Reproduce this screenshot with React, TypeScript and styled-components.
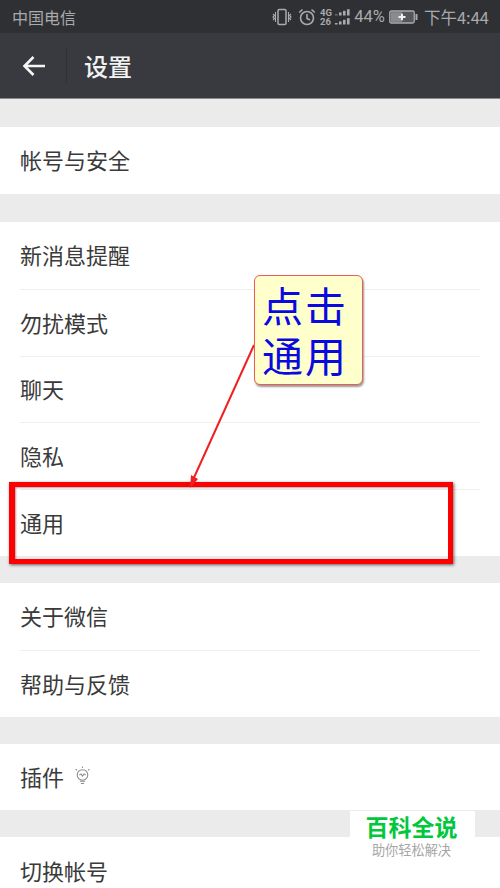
import React from "react";
import styled, { createGlobalStyle } from "styled-components";

const GlobalStyle = createGlobalStyle`
  html, body {
    margin: 0;
    padding: 0;
    background: #ebebeb;
    font-family: "Noto Sans CJK SC", "Noto Sans", sans-serif;
  }
`;

const Page = styled.div`
  position: relative;
  width: 500px;
  height: 888px;
  overflow: hidden;
  background: #ebebeb;
`;

const StatusBar = styled.div`
  height: 33px;
  background: #2f3034;
  color: #a9aaac;
  font-size: 16px;
  display: flex;
  align-items: center;
  justify-content: space-between;
  padding: 0 11px 0 12px;
`;

const StatusRight = styled.div`
  display: flex;
  align-items: center;
  gap: 4px;
`;

const Percent = styled.span`
  font-family: "Roboto", sans-serif;
  font-size: 16.5px;
  margin-left: -1px;
`;

const Clock = styled.span`
  margin-left: 2px;
  font-size: 16.5px;
`;

const Toolbar = styled.div`
  height: 65px;
  background: #393a3f;
  border-bottom: 1px solid #8b8b8b;
  display: flex;
  align-items: center;
`;

const BackSlot = styled.div`
  width: 67px;
  height: 34px;
  border-right: 1px solid #303135;
  display: flex;
  align-items: center;
  padding-left: 22px;
  box-sizing: border-box;
`;

const Title = styled.div`
  margin-left: 17px;
  font-size: 24px;
  font-weight: 500;
  color: #f2f2f2;
`;

const Section = styled.div<{ $top: number }>`
  margin-top: ${(p) => p.$top}px;
  background: #fff;
`;

const Row = styled.div`
  height: 66.8px;
  margin-left: 20px;
  margin-right: 20px;
  padding-bottom: 2px;
  box-sizing: border-box;
  display: flex;
  align-items: center;
  gap: 10px;
  font-size: 22px;
  color: #3a3a3a;
  & + & {
    border-top: 1px solid #efefef;
  }
`;

const RedBox = styled.div`
  position: absolute;
  left: 9px;
  top: 482px;
  width: 444px;
  height: 82px;
  box-sizing: border-box;
  border: 5px solid #ff0000;
  border-left-width: 6px;
  box-shadow: 1px 1px 3px rgba(0, 0, 0, 0.6), inset 1px 1px 2px rgba(0, 0, 0, 0.35);
`;

const Arrow = styled.svg`
  position: absolute;
  left: 180px;
  top: 335px;
`;

const Callout = styled.div`
  position: absolute;
  left: 254px;
  top: 275px;
  width: 109px;
  height: 110px;
  box-sizing: border-box;
  background: #ffffcc;
  border: 1.5px solid #ee5a55;
  border-radius: 6px;
  box-shadow: 1px 2px 2px rgba(0, 0, 0, 0.4);
  color: #0a0ae0;
  font-family: "Liberation Sans", "Noto Sans CJK SC", sans-serif;
  font-size: 41px;
  line-height: 50px;
  padding: 7px 0 0 7px;
  letter-spacing: 2px;
`;

const CalloutLine = styled.div``;

const Watermark = styled.div`
  position: absolute;
  left: 350px;
  top: 811px;
  width: 125px;
  height: 48px;
  background: #fff;
  text-align: center;
  font-family: "Liberation Sans", "Noto Sans CJK SC", sans-serif;
`;

const MarkTitle = styled.div`
  color: #00c83c;
  font-size: 23px;
  font-weight: 700;
  line-height: 30px;
  margin-top: 2px;
  margin-right: 2px;
`;

const MarkSub = styled.div`
  color: #a6a6a6;
  font-size: 13.2px;
  line-height: 16px;
  margin-right: 2px;
`;

const VibrateSvg = styled.svg`
  margin-right: 2px;
`;

const VibrateIcon = () => (
  <VibrateSvg width="20" height="18" viewBox="0 0 20 18" fill="none" stroke="#a9aaac" strokeWidth="1.5">
    <rect x="6" y="1.5" width="8" height="15" rx="1.2" />
    <path d="M3.5 4v10M1 6l1.5 1.5L1 9l1.5 1.5L1 12M16.5 4v10M19 6l-1.5 1.5L19 9l-1.5 1.5L19 12" strokeWidth="1.1" />
  </VibrateSvg>
);

const AlarmIcon = () => (
  <svg width="18" height="18" viewBox="0 0 18 18" fill="none" stroke="#a9aaac" strokeWidth="1.6">
    <circle cx="9" cy="10" r="6.5" />
    <path d="M9 6v4.5l3 1.5M1.2 4.5L4.5 1.5M16.8 4.5L13.5 1.5" />
  </svg>
);

const NetworkIcon = () => {
  const bars = [0, 1, 2, 3];
  return (
    <svg width="31" height="18" viewBox="0 0 31 18" fill="#a9aaac">
      <text x="0" y="7.5" fontSize="9.5" fontWeight="700" fontFamily="Roboto, sans-serif">4G</text>
      <text x="0" y="17" fontSize="9.5" fontWeight="700" fontFamily="Roboto, sans-serif">26</text>
      {bars.map((i) => (
        <rect key={"t" + i} x={15 + i * 4} y={7.5 - i * 1.6 - 1.5} width="2.6" height={i * 1.6 + 1.5} opacity={i === 0 ? 0.5 : 1} />
      ))}
      {bars.map((i) => (
        <rect key={"b" + i} x={15 + i * 4} y={16.5 - i * 1.6 - 1.5} width="2.6" height={i * 1.6 + 1.5} />
      ))}
    </svg>
  );
};

const BatteryIcon = () => (
  <svg width="29" height="14" viewBox="0 0 29 14">
    <rect x="0.75" y="1" width="24.5" height="12" rx="1.5" fill="#55565a" stroke="#a9aaac" strokeWidth="1.3" />
    <rect x="2" y="2.2" width="11" height="9.6" fill="#8a8b8e" />
    <rect x="26.5" y="4" width="2" height="6" rx="0.6" fill="#a9aaac" />
    <path d="M9.5 7h7M13 3.8v6.4" stroke="#f0f0f0" strokeWidth="2" />
  </svg>
);

const BulbIcon = () => (
  <svg width="17" height="19" viewBox="0 0 16 18" fill="none" stroke="#8a8a8a" strokeWidth="1">
    <circle cx="8" cy="8.5" r="5" />
    <path d="M5.5 14.5h5M6.5 16.5h3M5 8.5l1.5-1 1.5 2 1.5-2 1.5 1M8 0.5v1.5M1.5 3l1.2 1M14.5 3l-1.2 1" />
  </svg>
);

function App() {
  return (
    <Page>
      <GlobalStyle />
      <StatusBar>
        <span>中国电信</span>
        <StatusRight>
          <VibrateIcon />
          <AlarmIcon />
          <NetworkIcon />
          <Percent>44%</Percent>
          <BatteryIcon />
          <Clock>下午4:44</Clock>
        </StatusRight>
      </StatusBar>
      <Toolbar>
        <BackSlot>
          <svg width="24" height="22" viewBox="0 0 24 22" fill="none" stroke="#f5f5f5" strokeWidth="2.6">
            <path d="M23 11H2.5M11.5 2L2.5 11l9 9" />
          </svg>
        </BackSlot>
        <Title>设置</Title>
      </Toolbar>

      <Section $top={28}>
        <Row>帐号与安全</Row>
      </Section>

      <Section $top={28.2}>
        <Row>新消息提醒</Row>
        <Row>勿扰模式</Row>
        <Row>聊天</Row>
        <Row>隐私</Row>
        <Row>通用</Row>
      </Section>

      <Section $top={27}>
        <Row>关于微信</Row>
        <Row>帮助与反馈</Row>
      </Section>

      <Section $top={27}>
        <Row>
          插件
          <BulbIcon />
        </Row>
      </Section>

      <Section $top={27}>
        <Row>切换帐号</Row>
      </Section>

      <RedBox />
      <Arrow width="90" height="160" viewBox="0 0 90 160" fill="none">
        <path d="M74 10L12 147" stroke="#f02020" strokeWidth="2" />
        <path d="M10 153L11 140L18 144Z" fill="#f02020" />
      </Arrow>
      <Callout>
        <CalloutLine>点击</CalloutLine>
        <CalloutLine>通用</CalloutLine>
      </Callout>
      <Watermark>
        <MarkTitle>百科全说</MarkTitle>
        <MarkSub>助你轻松解决</MarkSub>
      </Watermark>
    </Page>
  );
}

export default App;
